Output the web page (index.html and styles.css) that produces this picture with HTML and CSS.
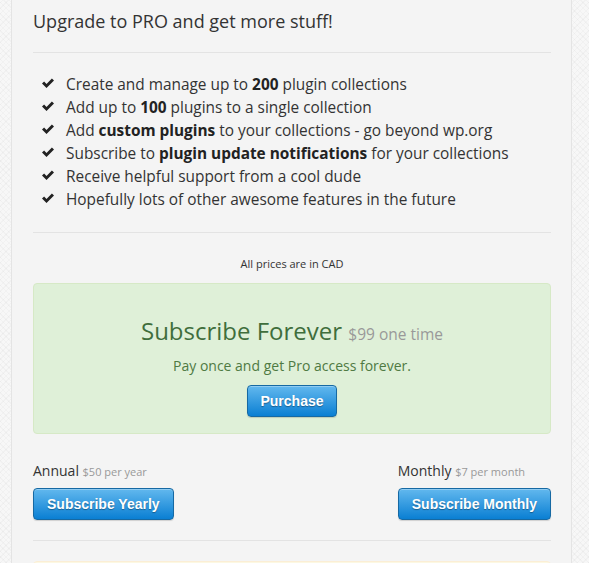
FILE: index.html
```html
<!DOCTYPE html>
<html lang="en">
<head>
	<meta charset="UTF-8">
	<title>Upgrade to PRO</title>
	<link rel="stylesheet" href="styles.css">
</head>
<body>
<div class="panel">
	<h3 class="title">Upgrade to PRO and get more stuff!</h3>
	<hr class="sep-top">
	<ul class="features">
		<li><svg class="check" viewBox="0 0 12 11"><path d="M0 5.6L2.1 3.5 4.5 5.9 9.9.5 12 2.6 4.5 10.1z"/></svg>Create and manage up to <b>200</b> plugin collections</li>
		<li><svg class="check" viewBox="0 0 12 11"><path d="M0 5.6L2.1 3.5 4.5 5.9 9.9.5 12 2.6 4.5 10.1z"/></svg>Add up to <b>100</b> plugins to a single collection</li>
		<li><svg class="check" viewBox="0 0 12 11"><path d="M0 5.6L2.1 3.5 4.5 5.9 9.9.5 12 2.6 4.5 10.1z"/></svg>Add <b>custom plugins</b> to your collections - go beyond wp.org</li>
		<li><svg class="check" viewBox="0 0 12 11"><path d="M0 5.6L2.1 3.5 4.5 5.9 9.9.5 12 2.6 4.5 10.1z"/></svg>Subscribe to <b>plugin update notifications</b> for your collections</li>
		<li><svg class="check" viewBox="0 0 12 11"><path d="M0 5.6L2.1 3.5 4.5 5.9 9.9.5 12 2.6 4.5 10.1z"/></svg>Receive helpful support from a cool dude</li>
		<li><svg class="check" viewBox="0 0 12 11"><path d="M0 5.6L2.1 3.5 4.5 5.9 9.9.5 12 2.6 4.5 10.1z"/></svg>Hopefully lots of other awesome features in the future</li>
	</ul>
	<hr class="sep-mid">
	<p class="currency">All prices are in CAD</p>
	<div class="forever">
		<h2>Subscribe Forever <small>$99 one time</small></h2>
		<p>Pay once and get Pro access forever.</p>
		<a class="btn" href="#">Purchase</a>
	</div>
	<div class="plans">
		<div class="plan">
			<div class="plan-name">Annual <small>$50 per year</small></div>
			<a class="btn" href="#">Subscribe Yearly</a>
		</div>
		<div class="plan">
			<div class="plan-name">Monthly <small>$7 per month</small></div>
			<a class="btn" href="#">Subscribe Monthly</a>
		</div>
	</div>
	<hr class="sep-bottom">
	<div class="notice"></div>
</div>
</body>
</html>
```

FILE: styles.css
```css
html, body { margin:0; height:100%; overflow:hidden; }
body {
	background-color:#f7f7f7;
	background-image:
		repeating-linear-gradient(45deg, rgba(0,0,0,0.025) 0 1px, transparent 1px 4px),
		repeating-linear-gradient(-45deg, rgba(0,0,0,0.025) 0 1px, transparent 1px 4px);
	font-family:"Open Sans", "Liberation Sans", sans-serif;
	color:#333;
}
.panel {
	margin:-1px 0 0 11px;
	width:518px;
	padding:9px 20px 40px 21px;
	background:#f4f4f4;
	border:1px solid #e4e4e4;
	min-height:600px;
}
.title { margin:0; font-size:18px; font-weight:normal; line-height:24px; }
hr { border:0; border-top:1px solid #e3e3e3; }
.sep-top { margin:19px 0 20px; }
.sep-mid { margin:21px 0 23px; }
.sep-bottom { margin:20px 0 20px; }
.features { list-style:none; margin:0; padding:0 0 0 9px; font-size:15.4px; line-height:23px; }
.check { width:12px; height:11px; fill:#222; margin-right:12px; vertical-align:1px; }
.features b { font-weight:bold; color:#222; }
.currency { text-align:center; font-size:11px; line-height:16px; margin:0 0 11px; }
.forever {
	background:#dff0d8; border:1px solid #d6e9c6; border-radius:4px;
	text-align:center; padding:31px 0 16px; color:#4f7a43;
}
.forever h2 { margin:0; font-size:24px; font-weight:normal; line-height:32px; color:#3f6e3c; }
.forever h2 small { font-size:15.5px; color:#999; }
.forever p { margin:6px 0 10px; font-size:14px; line-height:19px; }
.btn {
	display:inline-block; padding:0 12px; height:30px; line-height:30px;
	font-family:"Liberation Sans", Arial, sans-serif; font-weight:bold; font-size:14px;
	color:#fff; text-decoration:none; text-shadow:0 1px 1px rgba(0,0,0,0.35);
	background:linear-gradient(#62b8ee, #0a7fd3);
	border:1px solid #1669a3; border-radius:4px;
	box-shadow:inset 0 1px 0 rgba(255,255,255,0.3), 0 1px 1px rgba(0,0,0,0.15);
}
.plans { display:flex; justify-content:space-between; margin-top:28px; }
.plans .btn { padding:0 13px; }
.plan-name { font-size:14px; line-height:18px; margin-bottom:7px; }
.plan-name small { font-size:11px; color:#999; }
.notice { height:20px; background:#fcf8e3; border:1px solid #fbeed5; border-radius:4px; }
```
